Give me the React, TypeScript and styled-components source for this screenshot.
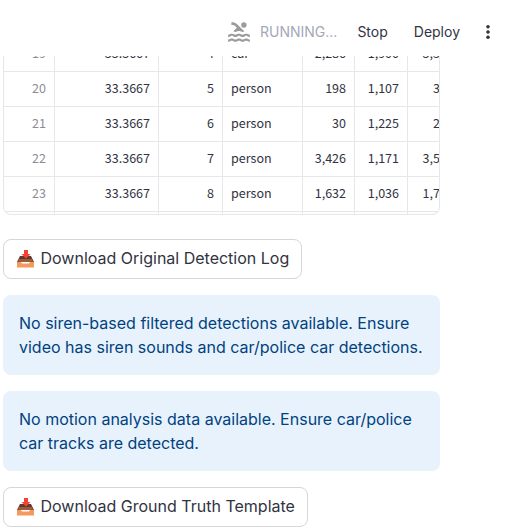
import React from "react";
import styled, { createGlobalStyle } from "styled-components";
import { MdPool } from "react-icons/md";

const Global = createGlobalStyle`
  *, *::before, *::after { box-sizing: border-box; }
  html, body { margin: 0; background: #fff; overflow: hidden; }
  body { font-family: Inter, "Liberation Sans", sans-serif; color: #31333f; }
`;

const Page = styled.div`
  display: flex;
  flex-direction: column;
  height: 530px;
  overflow: hidden;
  background: #fff;
`;

const Header = styled.header`
  display: flex;
  flex: none;
  align-items: center;
  justify-content: flex-end;
  height: 56px;
  padding: 8px 25px 0 0;
  font-size: 14px;
  line-height: 20px;
`;

const Status = styled.div`
  display: flex;
  align-items: center;
  gap: 8px;
  margin-right: 20px;
  color: #a3a8b8;
  svg { color: #9b9b9b; }
`;

const HeaderButton = styled.button<{ $gap: number }>`
  margin: 0 ${(p) => p.$gap}px 0 0;
  padding: 0;
  border: 0;
  background: none;
  color: #31333f;
  font: inherit;
`;

const Main = styled.main`
  flex: 1;
  min-height: 0;
  overflow: hidden;
  padding-left: 3px;
`;

const Stack = styled.div`
  display: flex;
  flex-direction: column;
  align-items: flex-start;
  gap: 16px;
  width: 437px;
`;

const TableFrame = styled.div`
  width: 437px;
  height: 159px;
  margin-bottom: 8px;
  overflow: hidden;
  border: 1px solid #e6e7e9;
  border-top: 0;
  border-radius: 0 0 8px 8px;
  display: flex;
  flex-direction: column;
  font-family: "Noto Sans CJK JP", "Noto Sans", sans-serif;
  font-size: 12.540px;
  line-height: 18px;
`;

const Row = styled.div`
  display: grid;
  flex: none;
  grid-template-columns: 51px 104px 64px 80px 52px 53px 32px;
  height: 35px;
  border-bottom: 1px solid #e6e7e9;
  &:first-child { margin-top: -19px; }
`;

const Cell = styled.div<{ $left?: boolean; $muted?: boolean; $last?: boolean }>`
  display: flex;
  align-items: center;
  justify-content: ${(p) => (p.$left ? "flex-start" : "flex-end")};
  padding: 0 ${(p) => (p.$last ? 0 : 8)}px 2px 8px;
  border-right: ${(p) => (p.$last ? "0" : "1px solid #e6e7e9")};
  color: ${(p) => (p.$muted ? "#8b8d96" : "#31333f")};
  white-space: nowrap;
`;

const DownloadButton = styled.button`
  display: flex;
  align-items: center;
  height: 40px;
  padding: 0 12px 2px;
  border: 1px solid #d6d6d9;
  border-radius: 8px;
  background: #fff;
  color: #31333f;
  font: 16px/24px Inter, "Liberation Sans", sans-serif;
  white-space: nowrap;
  svg { margin-right: 5.500px; }
`;

const Alert = styled.div`
  width: 437px;
  height: 80px;
  padding: 16px;
  border-radius: 8px;
  background: #e8f2fc;
  color: #004280;
  font-size: 16px;
  line-height: 24px;
  white-space: nowrap;
`;

const Dots = () => (
  <svg width="20" height="20" viewBox="0 0 20 20" fill="#31333f">
    <circle cx="10" cy="4.700" r="1.800" />
    <circle cx="10" cy="10" r="1.800" />
    <circle cx="10" cy="15.300" r="1.800" />
  </svg>
);

const Inbox = () => (
  <svg width="19" height="19" viewBox="0 0 19 19">
    <path d="M4 7h11l3 6H1z" fill="#5f3a2b" />
    <path d="M3 10h13l1 3H2z" fill="#9b5a3c" />
    <path d="M1 13h4l1 1.500h7l1-1.500h4v5.500H1z" fill="#f39a5c" />
    <path d="M8 1h4v4h2.500L10 9.500 5.500 5H8z" fill="#f44336" />
  </svg>
);

const rows = [
  ["19", "33.3667", "4", "car", "2,286", "1,900", "3,5"],
  ["20", "33.3667", "5", "person", "198", "1,107", "3"],
  ["21", "33.3667", "6", "person", "30", "1,225", "2"],
  ["22", "33.3667", "7", "person", "3,426", "1,171", "3,5"],
  ["23", "33.3667", "8", "person", "1,632", "1,036", "1,7"],
  ["", "", "", "", "", "", ""],
];

export default function App() {
  return (
    <Page>
      <Global />
      <Header>
        <Status><MdPool size={26} />RUNNING...</Status>
        <HeaderButton $gap={26}>Stop</HeaderButton>
        <HeaderButton $gap={18}>Deploy</HeaderButton>
        <Dots />
      </Header>
      <Main>
        <Stack>
          <TableFrame>
            {rows.map((r, i) => (
              <Row key={i}>
                {r.map((v, j) => (
                  <Cell key={j} $left={j === 3} $muted={j === 0} $last={j === 6}>{v}</Cell>
                ))}
              </Row>
            ))}
          </TableFrame>
          <DownloadButton><Inbox />Download Original Detection Log</DownloadButton>
          <Alert>No siren-based filtered detections available. Ensure<br />video has siren sounds and car/police car detections.</Alert>
          <Alert>No motion analysis data available. Ensure car/police<br />car tracks are detected.</Alert>
          <DownloadButton><Inbox />Download Ground Truth Template</DownloadButton>
        </Stack>
      </Main>
    </Page>
  );
}
